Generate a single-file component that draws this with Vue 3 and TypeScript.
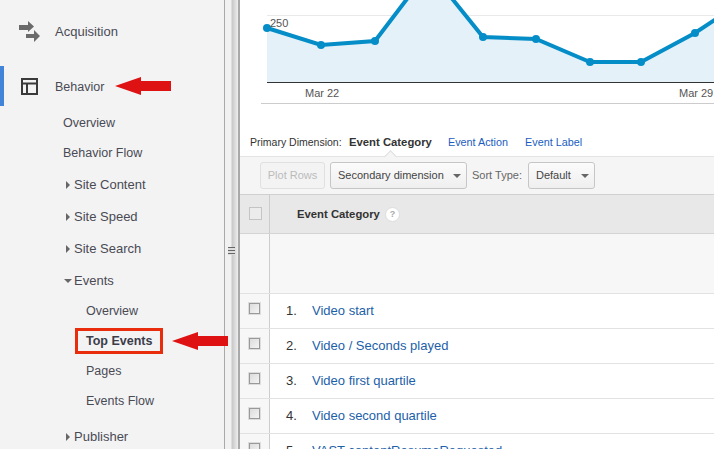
<script setup lang="ts">
const points: [number, number][] = [[27,28],[81,45],[135,41],[189,-30],[243,37],[296,39],[350,62],[401,62],[455,33],[509,-3]]
const line = points.map(p => p.join(',')).join(' ')
const area = `27,82 ${line} 474,82`
const dots = points.slice(0, 9).filter(p => p[1] > 0)
const rows = ['Video start', 'Video / Seconds played', 'Video first quartile', 'Video second quartile', 'VAST contentResumeRequested']
</script>

<template>
  <div class="page">
    <aside class="side">
      <div class="top acq">
        <svg class="ico" width="22" height="22" viewBox="0 0 22 22"><path fill="#6a6a6a" d="M1 5h9V1l6 5.500-6 5.500V10H1zM8 14h8v-4l6 6-6 6v-4H8z"/></svg>
        <span>Acquisition</span>
      </div>
      <div class="top beh">
        <i class="bar"></i>
        <svg class="ico bico" width="17" height="17" viewBox="0 0 17 17"><path fill="none" stroke="#3a3a3a" stroke-width="2" d="M1 1h15v15H1zM1 5.500h15M6 5.500V16"/></svg>
        <span class="behl">Behavior</span>
        <svg class="arrow a1" width="56" height="18" viewBox="0 0 56 18"><path fill="#de1212" d="M0 9 26 0v4h30v10H26v4z"/></svg>
      </div>
      <div class="sub first">Overview</div>
      <div class="sub">Behavior Flow</div>
      <div class="group mt"><i class="tri r"></i>Site Content</div>
      <div class="group"><i class="tri r"></i>Site Speed</div>
      <div class="group"><i class="tri r"></i>Site Search</div>
      <div class="group ev"><i class="tri d"></i>Events</div>
      <div class="leaf">Overview</div>
      <div class="leaf active"><b class="box">Top Events</b>
        <svg class="arrow a2" width="56" height="18" viewBox="0 0 56 18"><path fill="#de1212" d="M0 9 26 0v4h30v10H26v4z"/></svg>
      </div>
      <div class="leaf">Pages</div>
      <div class="leaf">Events Flow</div>
      <div class="group pub"><i class="tri r"></i>Publisher</div>
    </aside>
    <div class="split"><span class="grip"></span></div>
    <main class="main">
      <section class="chart">
        <svg class="plot" width="474" height="104" viewBox="0 0 474 104">
          <path d="M27 15.500H474" stroke="#e9e9e9" fill="none"/>
          <polygon :points="area" fill="#e4f1f8"/>
          <path d="M27 82.500H474" stroke="#333" fill="none"/>
          <polyline :points="line" fill="none" stroke="#058dc7" stroke-width="4"/>
          <circle v-for="(p, i) in dots" :key="i" :cx="p[0]" :cy="p[1]" r="4" fill="#058dc7"/>
          <text x="30" y="27" class="tick">250</text>
          <text x="65" y="97" class="tick">Mar 22</text>
          <text x="439" y="97" class="tick">Mar 29</text>
        </svg>
      </section>
      <nav class="dims">
        <span class="lbl">Primary Dimension:</span>
        <strong class="cur">Event Category</strong>
        <a class="lnk">Event Action</a>
        <a class="lnk">Event Label</a>
      </nav>
      <div class="tools">
        <i class="notch"></i>
        <span class="btn off">Plot Rows</span>
        <span class="btn sec">Secondary dimension<i class="caret"></i></span>
        <span class="sort">Sort Type:</span>
        <span class="btn def">Default<i class="caret"></i></span>
      </div>
      <div class="thead">
        <div class="c1"><i class="headbox"></i></div>
        <div class="th">Event Category <span class="q">?</span></div>
      </div>
      <div class="blank"><div class="c1"></div></div>
      <div v-for="(r, i) in rows" :key="r" class="row">
        <div class="c1"><i class="cb"></i></div>
        <span class="num">{{ i + 1 }}.</span>
        <a class="link">{{ r }}</a>
      </div>
    </main>
  </div>
</template>

<style>
html, body { margin: 0; background: #fff; }
</style>

<style scoped>
.page { width: 714px; height: 449px; display: flex; overflow: hidden; font-family: "Liberation Sans", Arial, sans-serif; font-size: 12px; color: #444; }
.side { width: 224px; height: 449px; flex: none; background: #f3f3f3; box-sizing: border-box; padding-top: 20px; position: relative; z-index: 1; font-size: 13px; color: #4a4a55; }
.top { height: 40px; display: flex; align-items: center; position: relative; }
.acq { height: 22px; padding-left: 18px; }
.acq span { margin-left: 15px; }
.beh { margin-top: 24px; padding-left: 21px; }
.beh span { margin-left: 17px; margin-top: 2px; }
.bico { margin-top: 1px; }
.behl { font-size: 12.500px; }
.bar { position: absolute; left: 0; top: 0; width: 4px; height: 40px; background: #4285d8; }
.ico { flex: none; }
.arrow { position: absolute; }
.a1 { left: 115px; top: 11px; }
.a2 { left: 172px; top: 6px; }
.sub { height: 30px; line-height: 30px; padding-left: 63px; font-size: 12.500px; }
.first { margin-top: 2px; }
.group { height: 32px; line-height: 32px; padding-left: 74px; position: relative; }
.mt { margin-top: 1px; }
.ev { height: 31px; }
.pub { margin-top: 5px; }
.tri { position: absolute; width: 0; height: 0; border-style: solid; border-color: transparent; }
.tri.r { left: 66px; top: 12px; border-width: 4px 0 4px 4px; border-left-color: #666; }
.tri.d { left: 64px; top: 14px; border-width: 4px 4px 0 4px; border-top-color: #666; }
.leaf { height: 30px; line-height: 30px; padding-left: 86px; position: relative; font-size: 12.500px; }
.box { position: absolute; left: 75px; top: 2px; width: 88px; height: 26px; box-sizing: border-box; border: 3px solid #e92c0c; line-height: 20px; padding-left: 8px; font-weight: 700; color: #3c3c4a; font-size: 12.500px; }
.split { width: 16px; height: 449px; flex: none; box-sizing: border-box; border-left: 1px solid #a9a9a9; border-right: 2px solid #a9a9a9; background: linear-gradient(90deg, #f1f1f1 0, #f1f1f1 6px, #c8c8c8 7px, #eeeeee 13px); position: relative; }
.grip { position: absolute; left: 3px; top: 247px; width: 7px; height: 8px; background: repeating-linear-gradient(#666 0 1px, #ddd 1px 3px); }
.main { flex: 1; min-width: 0; background: #fff; }
.chart { height: 104px; position: relative; overflow: hidden; }
.chart::after { content: ""; position: absolute; left: 21px; right: 0; bottom: 0; height: 1px; background: #ccc; }
.plot { display: block; }
.tick { font-size: 11px; fill: #555; font-family: "Liberation Sans", Arial, sans-serif; }
.dims { height: 52px; display: flex; align-items: center; padding: 0 0 0 10px; font-size: 10.500px; color: #333; box-sizing: border-box; padding-top: 24px; }
.lbl { width: 99px; flex: none; }
.cur { font-weight: 700; width: 99px; flex: none; color: #333; font-size: 11.300px; }
.lnk { color: #1a5dc0; margin-right: 17px; font-size: 10.800px; }
.tools { height: 38px; background: #f5f5f5; border-top: 1px solid #e4e4e4; box-sizing: border-box; display: flex; align-items: center; padding: 0 0 1px 20px; position: relative; font-size: 11px; }
.notch { position: absolute; left: 146px; top: -5px; width: 8px; height: 8px; transform: rotate(45deg); background: #f5f5f5; border-left: 1px solid #ddd; border-top: 1px solid #ddd; }
.btn { height: 27px; box-sizing: border-box; border: 1px solid #c6c6c6; border-radius: 3px; display: flex; align-items: center; background: linear-gradient(#fbfbfb, #efefef); color: #444; position: relative; }
.off { width: 65px; justify-content: center; color: #bbb; border-color: #e0e0e0; background: #f3f3f3; margin-right: 5px; }
.sec { width: 137px; padding-left: 7px; margin-right: 5px; }
.sort { width: 56px; flex: none; color: #666; }
.def { width: 67px; padding-left: 7px; }
.caret { position: absolute; right: 5px; top: 11px; width: 0; height: 0; border-style: solid; border-color: #666 transparent transparent; border-width: 4px 4px 0; }
.thead { height: 40px; background: #e8e8e8; border-top: 1px solid #d0d0d0; border-bottom: 1px solid #d4d4d4; box-sizing: border-box; display: flex; align-items: center; }
.c1 { width: 30px; height: 100%; flex: none; box-sizing: border-box; border-right: 1px solid #ccc; display: flex; justify-content: flex-start; padding: 9px 0 0 9px; }
.thead .c1 { padding-top: 12px; }
.headbox { width: 13px; height: 13px; box-sizing: border-box; border: 1px solid #c4c4c4; background: #ececec; }
.th { margin-left: 27px; font-weight: 700; font-size: 11.300px; color: #333; display: flex; align-items: center; gap: 5px; }
.q { width: 13px; height: 13px; border-radius: 50%; background: #fff; border: 1px solid #ddd; color: #aaa; font-size: 9px; display: flex; align-items: center; justify-content: center; }
.blank { height: 60px; background: #f7f7f7; border-bottom: 1px solid #e2e2e2; box-sizing: border-box; }
.row { height: 35px; display: flex; align-items: center; border-bottom: 1px solid #e2e2e2; box-sizing: border-box; font-size: 13px; }
.row .c1 { background: #f7f7f7; }
.cb { width: 9px; height: 9px; border: 1px solid #999; background: linear-gradient(135deg, #dcdcdc, #f4f4f4); outline: 1px solid #ddd; }
.num { width: 26px; margin: 0 0 2px 16px; flex: none; color: #333; }
.link { color: #1d5fa8; white-space: nowrap; margin-bottom: 2px; }
</style>
